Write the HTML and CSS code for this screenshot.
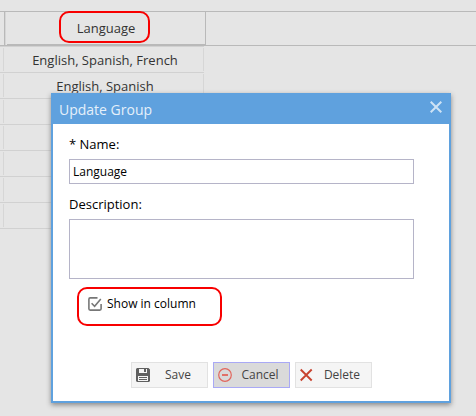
FILE: index.html
```html
<!DOCTYPE html>
<html lang="en">
<head>
<meta charset="utf-8">
<title>Update Group</title>
<link rel="stylesheet" href="styles.css">
</head>
<body>
<main class="grid">
  <div class="grid-head">
    <div class="head-prev"></div>
    <div class="head-cell"><span>Language</span></div>
  </div>
  <div class="grid-body">
    <div class="row"><i></i><span>English, Spanish, French</span></div>
    <div class="row"><i></i><span>English, Spanish</span></div>
    <div class="row"><i></i><span></span></div>
    <div class="row"><i></i><span></span></div>
    <div class="row"><i></i><span></span></div>
    <div class="row"><i></i><span></span></div>
    <div class="row"><i></i><span></span></div>
  </div>
</main>
<div class="mark mark-head"></div>
<section class="dialog">
  <header class="title">
    <h1>Update Group</h1>
    <svg class="close" width="12" height="12" viewBox="0 0 12 12"><path d="M.7 .7L11.3 11.3M11.3 .7L.7 11.3"/></svg>
  </header>
  <form class="form">
    <label class="label" for="name">* Name:</label>
    <input class="field" id="name" type="text" value="Language">
    <label class="label label-desc" for="desc">Description:</label>
    <textarea class="field area" id="desc"></textarea>
    <div class="check">
      <svg width="14" height="14" viewBox="0 0 14 14"><path d="M9.5 .9H2.2Q.9 .9 .9 2.2V11.8Q.9 13.1 2.2 13.1H11.8Q13.1 13.1 13.1 11.8V7M3.6 6.2L6.6 9.2L12.8 2"/></svg>
      <span>Show in column</span>
    </div>
    <div class="buttons">
      <button class="btn" type="button">
        <svg width="14" height="14" viewBox="0 0 14 14"><path fill="#606060" fill-rule="evenodd" d="M1 0H12.5L14 1.5V13L13 14H1L0 13V1ZM3 1V5H11V1ZM2 8V13H12V8Z"/><path fill="#606060" d="M8 1H10V4H8ZM3 9H11V10H3ZM3 11H11V12H3Z"/></svg>
        <span>Save</span>
      </button>
      <button class="btn active" type="button">
        <svg width="14" height="14" viewBox="0 0 14 14"><circle cx="7" cy="7" r="6.3" fill="none" stroke="#e2665c" stroke-width="1.2"/><path d="M4 7H10" stroke="#e2665c" stroke-width="1.8"/></svg>
        <span>Cancel</span>
      </button>
      <button class="btn" type="button">
        <svg width="14" height="14" viewBox="0 0 14 14"><path d="M.7 1.5L11.7 12.5M11.7 1.5L.7 12.5" stroke="#c8432f" stroke-width="1.9"/></svg>
        <span>Delete</span>
      </button>
    </div>
  </form>
</section>
<div class="mark mark-check"></div>
</body>
</html>
```
FILE: styles.css
```css
* { box-sizing: border-box; }
body {
  margin: 0;
  width: 476px;
  height: 416px;
  overflow: hidden;
  position: relative;
  background: #e5e5e5;
  color: #333;
  font: 13px/18px "Open Sans", sans-serif;
}
.grid { padding-top: 11px; }
.grid-head {
  display: flex;
  height: 35px;
  border-top: 1px solid #b9b9b9;
  border-bottom: 1px solid #b9b9b9;
}
.head-prev {
  width: 5px;
  margin-right: 2px;
  border-right: 1px solid #b9b9b9;
  box-shadow: 1px 0 #d6d6d6;
}
.head-cell {
  width: 199px;
  padding-top: 7px;
  border-right: 1px solid #b9b9b9;
  border-bottom: 1px solid #b9b9b9;
  text-align: center;
}
.grid-body {
  width: 204px;
  border-top: 1px solid #d1d1d1;
}
.row {
  display: flex;
  height: 26px;
  border-bottom: 1px solid #d1d1d1;
}
.row i {
  width: 4px;
  margin: 1px 0;
  border-right: 1px solid #d6d6d6;
}
.row span {
  flex: 1;
  margin: 1px 0;
  padding: 3px 0 0 3px;
  border-right: 1px solid #d6d6d6;
  text-align: center;
}
.mark {
  position: absolute;
  border: 2px solid #f80000;
}
.mark-head { left: 59px; top: 11px; width: 91px; height: 32px; border-radius: 10px; }
.mark-check { left: 77px; top: 287px; width: 145px; height: 39px; border-radius: 10px; }
.dialog {
  position: absolute;
  left: 51px;
  top: 93px;
  width: 400px;
  height: 310px;
  border: 2px solid #5fa1de;
  background: #fff;
  box-shadow: 0 2px 5px #888;
}
.title {
  display: flex;
  justify-content: space-between;
  height: 29px;
  padding: 5px 7px 0 6px;
  background: #5fa1de;
  color: #e5f0fa;
}
.title h1 { margin: 0; font-size: 14px; font-weight: 400; line-height: 20px; }
.close { margin-top: 1px; fill: none; stroke: #cfe3f5; stroke-width: 2; }
.form {
  display: flex;
  flex-direction: column;
  padding: 11px 35px 0 16px;
  color: #000;
}
.label { height: 18px; margin-bottom: 6px; }
.label-desc { margin: 11px 0 6px; }
.field {
  display: block;
  width: 345px;
  height: 25px;
  margin: 0;
  padding: 0 3px;
  border: 1px solid #b5b4c8;
  border-radius: 0;
  background: #fff;
  color: #000;
  font: 12px/18px "Open Sans", sans-serif;
  outline: 0;
}
.area { height: 60px; resize: none; }
.check {
  display: flex;
  align-items: center;
  gap: 5px;
  height: 18px;
  margin: 16px 0 0 19px;
  font-size: 12px;
}
.check svg { fill: none; stroke: #777; stroke-width: 1.6; }
.buttons { display: flex; gap: 5px; margin: 49px 0 0 62px; }
.btn {
  display: flex;
  align-items: center;
  width: 77px;
  height: 26px;
  padding: 0 4px;
  border: 1px solid #e2e2e2;
  background: #f5f5f5;
  color: #444;
  font: 12px/18px "Open Sans", sans-serif;
}
.btn svg { flex: none; }
.btn span { flex: 1; padding-left: 3px; text-align: center; }
.btn.active { border-color: #a9a9f5; background: #dadada; }
```
